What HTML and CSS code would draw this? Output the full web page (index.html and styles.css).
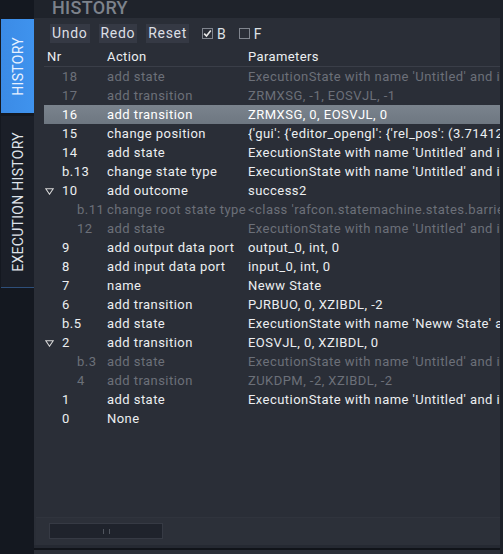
FILE: index.html
```html
<!DOCTYPE html>
<html>
<head>
<meta charset="utf-8">
<link rel="stylesheet" href="styles.css">
</head>
<body>
<div class="app">
  <div class="sidebar">
    <div class="tab tab-active"><span>HISTORY</span></div>
    <div class="tab tab-exec"><span>EXECUTION HISTORY</span></div>
  </div>
  <div class="main">
    <div class="titlebar"><span class="title">HISTORY</span></div>
    <div class="content">
      <div class="toolbar">
        <button class="btn">Undo</button>
        <button class="btn">Redo</button>
        <button class="btn">Reset</button>
        <label class="check"><span class="box checked"><svg width="9" height="9" viewBox="0 0 9 9"><path d="M1.2 4.6 L3.5 7 L7.8 1.6" fill="none" stroke="#e8e8e8" stroke-width="1.6"/></svg></span>B</label>
        <label class="check"><span class="box"></span>F</label>
      </div>
      <div class="tree">
        <div class="head">
          <div class="c1">Nr</div><div class="c2">Action</div><div class="c3">Parameters</div>
        </div>
        <div class="rows">
          <div class="row dim"><div class="c1"><span class="nr">18</span></div><div class="c2">add state</div><div class="c3">ExecutionState with name 'Untitled' and id 'ZRMXSG'</div></div>
          <div class="row dim"><div class="c1"><span class="nr">17</span></div><div class="c2">add transition</div><div class="c3">ZRMXSG, -1, EOSVJL, -1</div></div>
          <div class="row sel"><div class="c1"><span class="nr">16</span></div><div class="c2">add transition</div><div class="c3">ZRMXSG, 0, EOSVJL, 0</div></div>
          <div class="row"><div class="c1"><span class="nr">15</span></div><div class="c2">change position</div><div class="c3">{'gui': {'editor_opengl': {'rel_pos': (3.71412, 1.2)}}}</div></div>
          <div class="row"><div class="c1"><span class="nr">14</span></div><div class="c2">add state</div><div class="c3">ExecutionState with name 'Untitled' and id 'ABCDEF'</div></div>
          <div class="row"><div class="c1"><span class="nr">b.13</span></div><div class="c2">change state type</div><div class="c3">ExecutionState with name 'Untitled' and id 'ABCDEF'</div></div>
          <div class="row"><div class="c1"><svg class="exp" width="9" height="7" viewBox="0 0 9 7"><path d="M0.8 0.8 H8.2 L4.5 6.2 Z" fill="none" stroke="#d8d8d8" stroke-width="1.1"/></svg><span class="nr">10</span></div><div class="c2">add outcome</div><div class="c3">success2</div></div>
          <div class="row dim"><div class="c1"><span class="nr l1">b.11</span></div><div class="c2">change root state type</div><div class="c3">&lt;class 'rafcon.statemachine.states.barrier_concurrency_state'&gt;</div></div>
          <div class="row dim"><div class="c1"><span class="nr l1">12</span></div><div class="c2">add state</div><div class="c3">ExecutionState with name 'Untitled' and id 'QWERTY'</div></div>
          <div class="row"><div class="c1"><span class="nr">9</span></div><div class="c2">add output data port</div><div class="c3">output_0, int, 0</div></div>
          <div class="row"><div class="c1"><span class="nr">8</span></div><div class="c2">add input data port</div><div class="c3">input_0, int, 0</div></div>
          <div class="row"><div class="c1"><span class="nr">7</span></div><div class="c2">name</div><div class="c3">Neww State</div></div>
          <div class="row"><div class="c1"><span class="nr">6</span></div><div class="c2">add transition</div><div class="c3">PJRBUO, 0, XZIBDL, -2</div></div>
          <div class="row"><div class="c1"><span class="nr">b.5</span></div><div class="c2">add state</div><div class="c3">ExecutionState with name 'Neww State' and id 'PJRBUO'</div></div>
          <div class="row"><div class="c1"><svg class="exp" width="9" height="7" viewBox="0 0 9 7"><path d="M0.8 0.8 H8.2 L4.5 6.2 Z" fill="none" stroke="#d8d8d8" stroke-width="1.1"/></svg><span class="nr">2</span></div><div class="c2">add transition</div><div class="c3">EOSVJL, 0, XZIBDL, 0</div></div>
          <div class="row dim"><div class="c1"><span class="nr l1">b.3</span></div><div class="c2">add state</div><div class="c3">ExecutionState with name 'Untitled' and id 'ZUKDPM'</div></div>
          <div class="row dim"><div class="c1"><span class="nr l1">4</span></div><div class="c2">add transition</div><div class="c3">ZUKDPM, -2, XZIBDL, -2</div></div>
          <div class="row"><div class="c1"><span class="nr">1</span></div><div class="c2">add state</div><div class="c3">ExecutionState with name 'Untitled' and id 'EOSVJL'</div></div>
          <div class="row"><div class="c1"><span class="nr">0</span></div><div class="c2">None</div><div class="c3"></div></div>
        </div>
      </div>
      <div class="hscroll"><div class="thumb"><span class="grip"></span></div></div>
    </div>
    <div class="bottom"></div>
  </div>
</div>
</body>
</html>
```

FILE: styles.css
```css
* { box-sizing: border-box; }
html, body { margin: 0; padding: 0; }
body {
  background: #141820;
  font-family: Roboto, "Liberation Sans", sans-serif;
  width: 503px;
  height: 554px;
  overflow: hidden;
}
.app {
  display: flex;
  width: 503px;
  height: 554px;
}
.sidebar {
  width: 34px;
  flex: none;
  display: flex;
  flex-direction: column;
  padding-top: 19px;
  padding-left: 1px;
  background: #141820;
}
.tab {
  display: flex;
  align-items: center;
  justify-content: center;
  font-size: 14px;
  letter-spacing: 0.3px;
}
.tab span {
  writing-mode: vertical-rl;
  transform: rotate(180deg);
}
.tab-active {
  height: 94px;
  background: linear-gradient(90deg, #3b8be6, #3f93ee);
  color: #e8f1ff;
}
.tab-exec {
  margin-top: 3px;
  height: 172px;
  background: #1b1f28;
  color: #dfe3ea;
  border-bottom: 1px solid #2e4f7a;
}
.main {
  flex: 1;
  display: flex;
  flex-direction: column;
  background: #2a2e37;
  border-right: 3px solid #1d2129;
}
.titlebar {
  height: 18px;
  background: #1f232b;
  padding-left: 18px;
  overflow: hidden;
  flex: none;
}
.title {
  display: block;
  font-size: 18px;
  font-weight: 500;
  color: #7d828b;
  line-height: 14px;
  letter-spacing: 0.3px;
  margin-top: 1px;
}
.content {
  flex: 1;
  display: flex;
  flex-direction: column;
  padding-left: 2px;
}
.toolbar {
  display: flex;
  align-items: center;
  height: 28px;
  padding-top: 3px;
  padding-left: 14px;
  gap: 9px;
  flex: none;
}
.btn {
  font-family: inherit;
  font-size: 14px;
  color: #dcdfe4;
  background: #353944;
  border: none;
  height: 19px;
  padding: 0 2px;
  line-height: 19px;
  letter-spacing: 0.7px;
  margin: 0;
}
.check {
  display: flex;
  align-items: center;
  font-size: 14px;
  color: #dfe2e6;
  gap: 4px;
  margin-left: 4px;
}
.box {
  width: 11px;
  height: 11px;
  border: 1px solid #80858e;
  display: flex;
  align-items: center;
  justify-content: center;
}
.tree {
  flex: 1;
  padding-left: 8px;
  border-bottom: 1px solid #30343d;
  overflow: hidden;
}
.head, .row {
  display: grid;
  grid-template-columns: 63px 141px 252px;
  white-space: nowrap;
}
.head {
  height: 20px;
  margin-top: 1px;
  align-items: center;
  font-size: 13px;
  color: #eceef1;
  border-bottom: 1px solid #3a3e48;
  letter-spacing: 0.4px;
}
.head .c1 { padding-left: 3px; }
.row {
  height: 19px;
  align-items: center;
  font-size: 13px;
  color: #eceef1;
  letter-spacing: 0.45px;
}
.row > div { overflow: hidden; }
.row .c1 { position: relative; height: 19px; display: flex; align-items: center; }
.nr { padding-left: 18px; }
.nr.l1 { padding-left: 33px; }
.exp { position: absolute; left: 1px; top: 7px; }
.row.dim { color: #6c7079; }
.row.sel { background: linear-gradient(180deg, #7a838d, #6e7781); color: #ffffff; }
.hscroll {
  height: 27px;
  flex: none;
  background: #2c3039;
  padding: 5px 0 0 13px;
}
.thumb {
  width: 114px;
  height: 16px;
  background: #1f232c;
  border: 1px solid #363a44;
  display: flex;
  align-items: center;
  justify-content: center;
}
.grip {
  width: 7px;
  height: 5px;
  border-left: 1px solid #50555e;
  border-right: 1px solid #50555e;
}
.bottom {
  height: 9px;
  flex: none;
  background: linear-gradient(180deg, #252932 0, #252932 3px, #11141a 3px, #11141a 5px, #2b2f38 5px);
}
```
